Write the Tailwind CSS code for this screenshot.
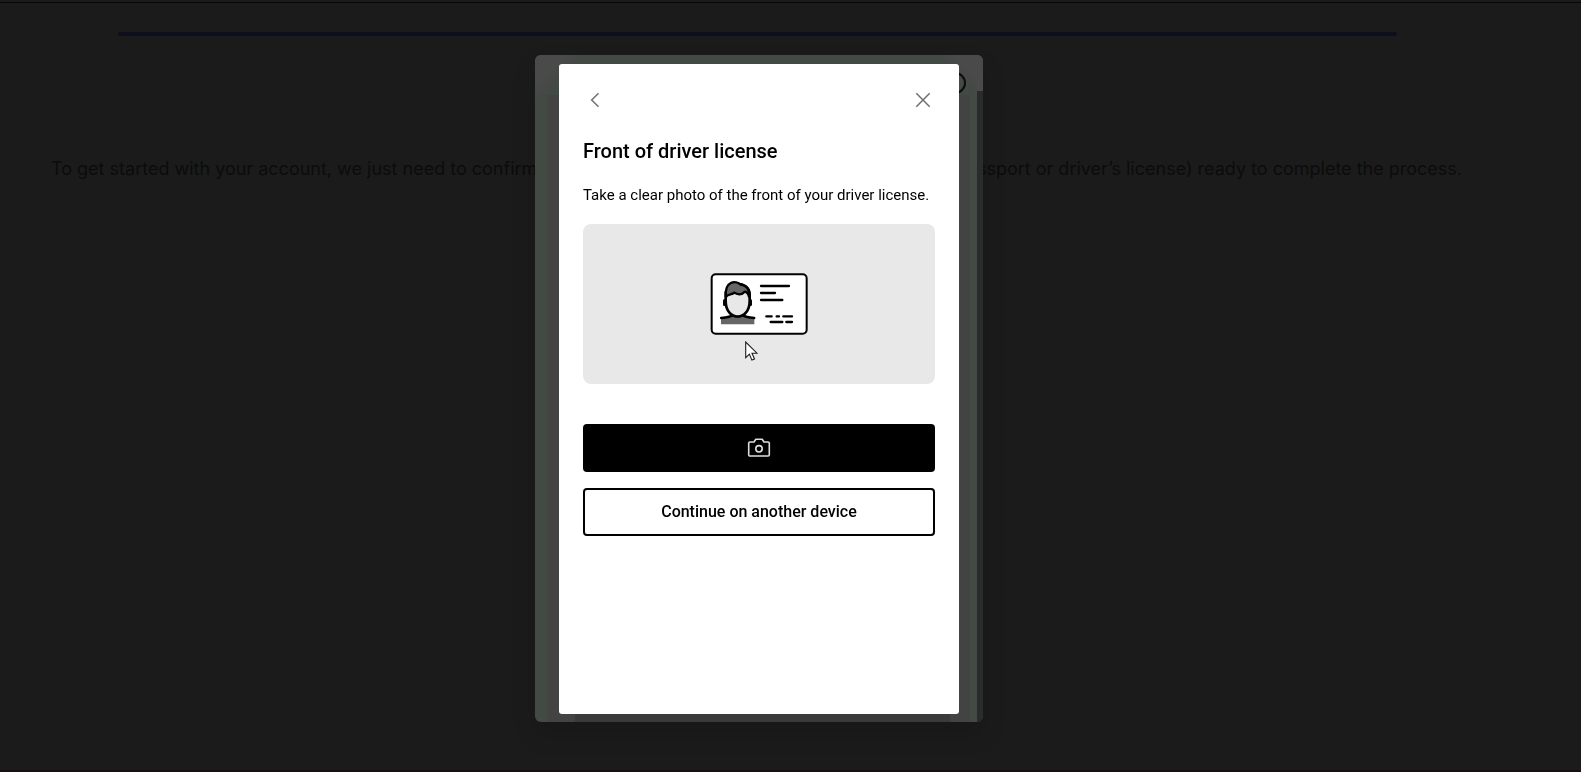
<!DOCTYPE html>
<html lang="en">
<head>
  <meta charset="UTF-8">
  <meta name="viewport" content="width=device-width, initial-scale=1.0">
  <title>Verify your identity</title>
  <script src="https://cdn.jsdelivr.net/npm/@tailwindcss/browser@4"></script>
</head>
<body class="bg-[#1b1b1b] min-h-screen overflow-hidden font-['Inter',sans-serif]">
  <!-- Page behind the dialog -->
  <main class="min-h-screen flex flex-col pt-[2px] border-b-2 border-[#180f14]">
    <div class="h-px bg-[#060606]"></div>
    <div class="pr-[63px]">
      <div class="mt-[29px] ml-[118px] mr-[121px] h-[4px] rounded-full bg-[#0e0f1c]"></div>
      <p class="mt-[119px] pl-[51px] pr-[56px] flex justify-between text-[18px] leading-[28px] whitespace-nowrap text-[#0c0c0c]">
        <span>To get started with your account, we just need to confirm</span>
        <span>passport or driver’s license) ready to complete the process.</span>
      </p>
    </div>
  </main>

  <!-- Outer dialog -->
  <div class="fixed inset-0 pr-[63px] pt-[55px] flex justify-center items-start">
    <div class="relative w-[448px] rounded-[6px] overflow-hidden bg-[#434943] px-[24px] pt-[9px] pb-[8px] shadow-[0_12px_24px_#00000020]">
      <div class="absolute left-0 top-0 size-[48px] bg-linear-135 from-[#4a4a4a] from-30% to-[#434943] to-55%"></div>
      <div class="absolute right-0 top-0 size-[48px] bg-linear-225 from-[#4a4a4a] from-30% to-[#434943] to-50%"></div>
      <div class="absolute left-[12px] right-[13px] top-[40px] bottom-0 bg-[#434343]"></div>
      <div class="absolute left-[40px] right-[33px] bottom-0 h-[8px] bg-[#3a3a3a]"></div>
      <div class="absolute right-0 top-0 w-[6px] h-[36px] bg-[#4a4a4a]"></div>
      <div class="absolute right-0 top-[36px] bottom-0 w-[6px] bg-[#2b2b2b]"></div>
      <button type="button" aria-label="Close" class="absolute right-[17px] top-[17px] size-[22px] rounded-full border-2 border-[#0c0c0c]"></button>

      <!-- Capture dialog -->
      <section role="dialog" aria-labelledby="title" class="relative min-h-[650px] rounded-[3px] bg-white p-[24px] text-black font-['Roboto',sans-serif]">
        <div class="flex justify-between">
          <button type="button" aria-label="Back" class="size-[24px]">
            <svg class="size-[24px]" viewBox="0 0 24 24" fill="none" stroke="#757575" stroke-width="1.6"><path d="M15.5 5.2 8.7 12l6.8 6.8"/></svg>
          </button>
          <button type="button" aria-label="Close" class="size-[24px]">
            <svg class="size-[24px]" viewBox="0 0 24 24" fill="none" stroke="#6e6e73" stroke-width="1.5"><path d="M5.3 5.3l13.4 13.4M18.7 5.3 5.3 18.7"/></svg>
          </button>
        </div>

        <h1 id="title" class="mt-[25px] text-[20px] leading-[28px] font-medium">Front of driver license</h1>
        <p class="mt-[18px] text-[15px] leading-[24px] whitespace-nowrap">Take a clear photo of the front of your driver license.</p>

        <div class="relative mt-[17px] h-[160px] rounded-[8px] bg-[#e8e8e8] flex items-center justify-center">
          <svg class="w-[98px] h-[62px]" viewBox="30 24 294 186" fill="none" stroke="#000" stroke-linecap="round" stroke-linejoin="round">
            <rect x="35" y="28" width="285" height="178" rx="12" fill="#fff" stroke-width="6"/>
            <path d="M63 178v-20c20-2 30-6 36-10h28c6 4 16 8 36 10v20z" fill="#666" stroke="none"/>
            <path d="M63 159c20-2 32-5 37-9 6 5 20 5 26 0 5 4 17 7 37 9" stroke-width="7"/>
            <path d="M77 88c0-42 72-42 72 0v20c0 62-72 62-72 0z" fill="#e8e8e8" stroke-width="8"/>
            <path d="M78 96c-6-50 30-50 44-37 18 2 28 16 25 36-2-8-6-14-13-15-10 12-24 8-31 3-8 8-19 2-25 13z" fill="#666" stroke-width="7"/>
            <path d="M73 107v12M152 107v12" stroke-width="8"/>
            <path d="M183 63h84M183 84h42M183 105h64M199 154h16M230 154h7M250 154h26M212 171h35M259 171h17" stroke-width="7"/>
          </svg>
          <svg class="absolute left-[162px] top-[117px] w-[13px] h-[21px]" viewBox="0 0 13 21"><path d="M.7 1v15.6l3.7-3.5 2.5 6 2.6-1.1L7 12.2h5z" fill="#fff" stroke="#1c1c24" stroke-width="1.1"/></svg>
        </div>

        <button type="button" aria-label="Take photo" class="mt-[40px] w-full h-[48px] rounded-[4px] bg-black flex items-center justify-center">
          <svg class="size-[24px]" viewBox="0 0 24 24" fill="none" stroke="#dedede" stroke-width="1.6" stroke-linejoin="round"><path d="M3 6h4l1.8-2.7h6.4L17 6h4a1.3 1.3 0 0 1 1.3 1.3v11.4A1.3 1.3 0 0 1 21 20H3a1.3 1.3 0 0 1-1.3-1.3V7.3A1.3 1.3 0 0 1 3 6z"/><circle cx="12" cy="12.8" r="3.2"/></svg>
        </button>
        <button type="button" class="mt-[16px] w-full h-[48px] rounded-[4px] border-2 border-black text-[16px] font-medium">Continue on another device</button>
      </section>
    </div>
  </div>
</body>
</html>
